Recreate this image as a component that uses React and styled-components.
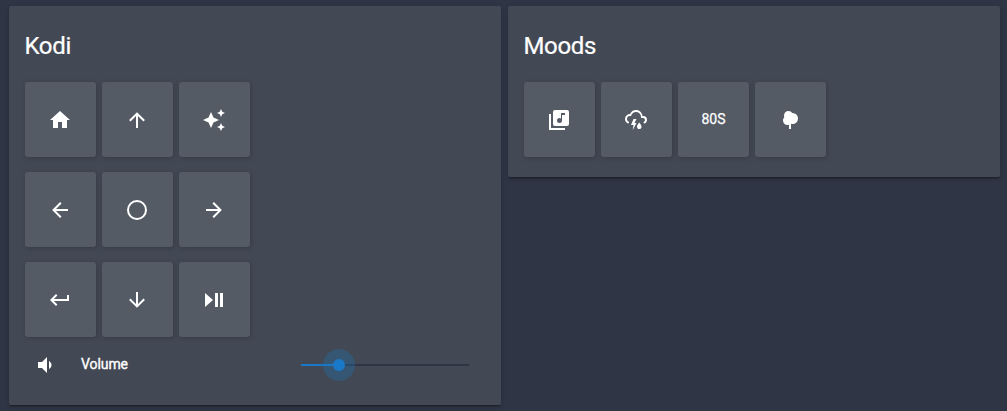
import React from "react";
import styled, { createGlobalStyle } from "styled-components";

const GlobalStyle = createGlobalStyle`
  * { box-sizing: border-box; }
  body {
    margin: 0;
    height: 411px;
    overflow: hidden;
    background: #2f3545;
    color: #fff;
    font-family: Roboto, sans-serif;
  }
`;

const Dashboard = styled.main`
  display: grid;
  grid-template-columns: 492px 492px;
  column-gap: 7px;
  align-items: start;
  padding: 6px 0 0 9px;
`;

const Card = styled.section`
  height: ${(p) => p.$height}px;
  padding: 0 16px;
  border-radius: 2px;
  background: #434954;
  box-shadow: 0 2px 2px 0 rgba(0, 0, 0, 0.14), 0 1px 5px 0 rgba(0, 0, 0, 0.12),
    0 3px 1px -2px rgba(0, 0, 0, 0.2);
`;

const Title = styled.h1`
  margin: 0 0 0 -0.6px;
  height: 76px;
  padding-top: 24px;
  font-size: 24px;
  font-weight: 400;
  line-height: 32px;
  letter-spacing: -0.32px;
  -webkit-text-stroke: 0.2px currentColor;
`;

const ButtonGrid = styled.div`
  display: grid;
  grid-template-columns: repeat(${(p) => p.$columns}, 71px);
  grid-auto-rows: 75px;
  gap: 15px 6px;
`;

const Button = styled.button`
  display: flex;
  align-items: center;
  justify-content: center;
  padding: 1px 1px 0 0;
  border: 0;
  border-radius: 3px;
  background: #555b65;
  color: #fff;
  font: 400 14px/20px Roboto, sans-serif;
  box-shadow: 1px 1px 4px rgba(40, 44, 60, 0.5);
`;

const ButtonLabel = styled.span`
  padding: 0 0 2px 1px;
  -webkit-text-stroke: 0.25px currentColor;
`;

const Icon = styled.svg`
  display: block;
  width: 24px;
  height: 24px;
  fill: currentColor;
`;

const VolumeRow = styled.div`
  display: flex;
  align-items: center;
  height: 56px;
  padding: 0 16px 0 8px;
`;

const VolumeLabel = styled.span`
  flex: 1;
  padding: 0 0 2px 24px;
  font-size: 14px;
  font-weight: 400;
  line-height: 20px;
  letter-spacing: -0.08px;
  -webkit-text-stroke: 0.35px currentColor;
`;

const Track = styled.div`
  display: flex;
  align-items: center;
  width: 168px;
  height: 2px;
  background: #2f3545;
`;

const Progress = styled.div`
  width: 38px;
  height: 2px;
  background: #1a78c8;
`;

const Halo = styled.div`
  display: flex;
  flex: none;
  align-items: center;
  justify-content: center;
  width: 32px;
  height: 32px;
  margin-left: -16px;
  border-radius: 50%;
  background: rgba(26, 120, 190, 0.3);
`;

const Thumb = styled.div`
  width: 12px;
  height: 12px;
  border-radius: 50%;
  background: #1a78c8;
`;

const paths = {
  home: "M10,20V14H14V20H19V12H22L12,3L2,12H5V20H10Z",
  up: "M13,20H11V8L5.5,13.5L4.08,12.08L12,4.16L19.92,12.08L18.5,13.5L13,8V20Z",
  creation:
    "M19,1L17.74,3.75L15,5L17.74,6.26L19,9L20.25,6.26L23,5L20.25,3.75M9,4L6.5,9.5L1,12L6.5,14.5L9,20L11.5,14.5L17,12L11.5,9.5M19,15L17.74,17.74L15,19L17.74,20.25L19,23L20.25,20.25L23,19L20.25,17.74",
  left: "M20,11V13H8L13.5,18.5L12.08,19.92L4.16,12L12.08,4.08L13.5,5.5L8,11H20Z",
  circle:
    "M12,20A8,8 0 0,1 4,12A8,8 0 0,1 12,4A8,8 0 0,1 20,12A8,8 0 0,1 12,20M12,2A10,10 0 0,0 2,12A10,10 0 0,0 12,22A10,10 0 0,0 22,12A10,10 0 0,0 12,2Z",
  right: "M4,11V13H16L10.5,18.5L11.92,19.92L19.84,12L11.92,4.08L10.5,5.5L16,11H4Z",
  enter: "M19,7V11H5.83L9.41,7.41L8,6L2,12L8,18L9.41,16.58L5.83,13H21V7H19Z",
  down: "M11,4H13V16L18.5,10.5L19.92,11.92L12,19.84L4.08,11.92L5.5,10.5L11,16V4Z",
  playPause: "M3,5V19L11,12M13,19H16V5H13M18,5V19H21V5",
  volume:
    "M5,9V15H9L14,20V4L9,9M18.5,12C18.5,10.23 17.5,8.71 16,7.97V16C17.5,15.29 18.5,13.76 18.5,12Z",
  music:
    "M20,2H8A2,2 0 0,0 6,4V16A2,2 0 0,0 8,18H20A2,2 0 0,0 22,16V4A2,2 0 0,0 20,2M18,7H15V12.5A2.5,2.5 0 0,1 12.5,15A2.5,2.5 0 0,1 10,12.5A2.5,2.5 0 0,1 12.5,10C13.07,10 13.58,10.19 14,10.5V5H18M4,6H2V22H18V20H4V6Z",
  storm:
    "M4.5,13.59C5,13.87 5.14,14.5 4.87,14.96C4.59,15.44 4,15.6 3.5,15.33V15.33C2,14.47 1,12.85 1,11A5,5 0 0,1 6,6C7,3.65 9.3,2 12,2C15.43,2 18.24,4.66 18.5,8.03L19,8A4,4 0 0,1 23,12C23,13.5 22.2,14.77 21,15.46V15.46C20.5,15.73 19.91,15.57 19.63,15.09C19.36,14.61 19.5,14 20,13.72V13.73C20.6,13.39 21,12.74 21,12A2,2 0 0,0 19,10H17V9A5,5 0 0,0 12,4C9.5,4 7.45,5.82 7.06,8.19C6.73,8.07 6.37,8 6,8A3,3 0 0,0 3,11C3,12.11 3.6,13.08 4.5,13.6V13.59M9.5,11H12.5L10.5,15H12.5L8.75,22L9.5,17H7L9.5,11M17.5,18.67C17.5,19.96 16.5,21 15.25,21C14,21 13,19.96 13,18.67C13,17.12 15.25,14.5 15.25,14.5C15.25,14.5 17.5,17.12 17.5,18.67Z",
  tree: "M11,21V16.74C10.53,16.91 10.03,17 9.5,17C7,17 5,15 5,12.5C5,11.23 5.5,10.09 6.36,9.27C6.13,8.73 6,8.13 6,7.5C6,5 8,3 10.5,3C12.06,3 13.44,3.8 14.25,5C14.33,5 14.41,5 14.5,5A5.5,5.5 0 0,1 20,10.5A5.5,5.5 0 0,1 14.5,16C14,16 13.5,15.93 13,15.79V21H11Z",
};

const Glyph = ({ name }) => (
  <Icon viewBox="0 0 24 24" aria-hidden="true">
    <path d={paths[name]} />
  </Icon>
);

const remote = ["home", "up", "creation", "left", "circle", "right", "enter", "down", "playPause"];

export default function App() {
  return (
    <>
      <GlobalStyle />
      <Dashboard>
        <Card $height={399}>
          <Title>Kodi</Title>
          <ButtonGrid $columns={3}>
            {remote.map((name) => (
              <Button key={name} aria-label={name}>
                <Glyph name={name} />
              </Button>
            ))}
          </ButtonGrid>
          <VolumeRow>
            <Glyph name="volume" />
            <VolumeLabel>Volume</VolumeLabel>
            <Track>
              <Progress />
              <Halo>
                <Thumb />
              </Halo>
            </Track>
          </VolumeRow>
        </Card>
        <Card $height={171}>
          <Title>Moods</Title>
          <ButtonGrid $columns={4}>
            <Button aria-label="music"><Glyph name="music" /></Button>
            <Button aria-label="storm"><Glyph name="storm" /></Button>
            <Button><ButtonLabel>80S</ButtonLabel></Button>
            <Button aria-label="tree"><Glyph name="tree" /></Button>
          </ButtonGrid>
        </Card>
      </Dashboard>
    </>
  );
}
